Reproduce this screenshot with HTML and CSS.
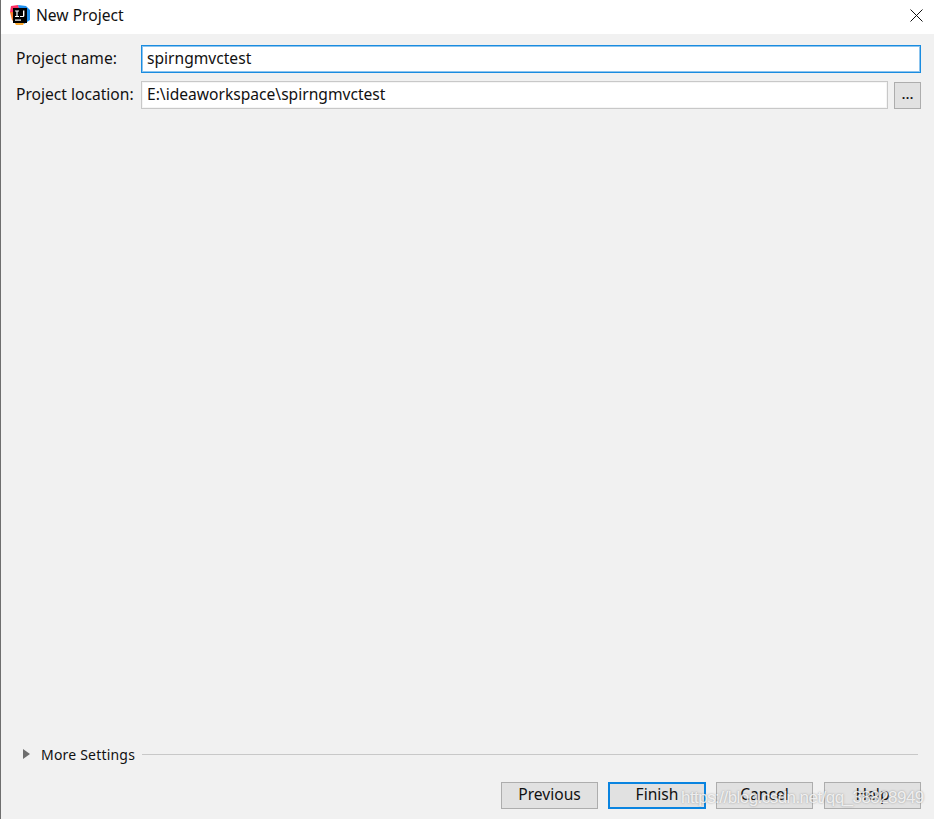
FILE: index.html
```html
<!DOCTYPE html>
<html lang="en">
<head>
<meta charset="utf-8">
<title>New Project</title>
<link rel="stylesheet" href="styles.css">
</head>
<body>
<div class="dialog">
  <header class="titlebar">
    <svg class="app-icon" width="21" height="22" viewBox="0 0 21 22" aria-hidden="true">
      <path d="M1 2 L8 1 L10 6 L3 12 L0 8 Z" fill="#fc2f63"/>
      <path d="M0 8 L4 8 L4 18 L2 16 Z" fill="#f97a2a"/>
      <path d="M8 1 L16 2 L20 6 L20 16 L14 20 L10 8 Z" fill="#1e8fee"/>
      <path d="M3 16 L15 17 L13 21 L6 21 Z" fill="#f9a72c"/>
      <rect x="3" y="4" width="14" height="15" fill="#000"/>
      <rect x="5" y="15.5" width="6" height="1.2" fill="#fff"/>
      <path d="M5 6.5 H9 V7.6 H7.6 V12 H9 V13 H5 V12 H6.4 V7.6 H5 Z M13 6.5 H14.4 V11.5 Q14.4 13 13 13 H10 V12 H13 Z" fill="#fff"/>
    </svg>
    <span class="title">New Project</span>
    <svg class="close" width="13" height="13" viewBox="0 0 13 13" aria-hidden="true">
      <path d="M0.5 0.5 L12.5 12.5 M12.5 0.5 L0.5 12.5" stroke="#111" stroke-width="1" fill="none"/>
    </svg>
  </header>
  <main class="content">
    <div class="form">
      <div class="row">
        <label class="label">Project name:</label>
        <div class="input focused">spirngmvctest</div>
      </div>
      <div class="row">
        <label class="label">Project location:</label>
        <div class="input grow">E:\ideaworkspace\spirngmvctest</div>
        <div class="browse">...</div>
      </div>
    </div>
    <div class="settings">
      <span class="arrow"></span>
      <span class="settings-label">More Settings</span>
      <span class="rule"></span>
    </div>
    <div class="buttons">
      <div class="btn">Previous</div>
      <div class="btn primary">Finish</div>
      <div class="btn">Cancel</div>
      <div class="btn help">Help</div>
    </div>
  </main>
  <div class="watermark">https://blog.csdn.net/qq_38828949</div>
</div>
</body>
</html>
```
FILE: styles.css
```css
* { box-sizing: border-box; }
html, body { margin: 0; height: 100%; }
body {
  font-family: "Noto Sans", "Open Sans", sans-serif;
  font-size: 15.6px;
  color: #111;
  overflow: hidden;
}
.dialog {
  position: relative;
  width: 934px;
  height: 819px;
  display: flex;
  flex-direction: column;
  background: #f1f1f1;
  border-left: 1px solid #6e6e6e;
}
.titlebar {
  height: 34px;
  flex: none;
  background: #fff;
  display: flex;
  align-items: center;
  padding: 0 11px 4px 9px;
}
.app-icon { flex: none; }
.title { margin-left: 5px; font-size: 15.6px; }
.close { margin-left: auto; }
.content {
  flex: 1;
  display: flex;
  flex-direction: column;
  padding: 11px 13px 10px 15px;
}
.form { display: flex; flex-direction: column; gap: 8px; }
.row { display: flex; align-items: center; height: 28px; }
.label { width: 125px; flex: none; padding-bottom: 2px; }
.input {
  flex: 1;
  height: 28px;
  background: #fff;
  border: 1px solid #c8c8c8;
  display: flex;
  align-items: center;
  padding: 0 5px 2px;
}
.focused { border: 1px solid #1a8ce0; box-shadow: inset 0 0 0 1px #8cc4ee; }
.grow { box-shadow: inset 0 0 0 1px #f5f5f5; }
.browse {
  width: 27px;
  height: 27px;
  margin-left: 6px;
  flex: none;
  background: #e1e1e1;
  border: 1px solid #adadad;
  text-align: center;
  line-height: 21px;
  font-size: 15px;
  font-weight: 500;
}
.settings {
  margin-top: auto;
  display: flex;
  align-items: center;
  height: 20px;
  padding-left: 7px;
}
.arrow {
  width: 0;
  height: 0;
  border-left: 7px solid #6e6e6e;
  border-top: 5.5px solid transparent;
  border-bottom: 5.5px solid transparent;
  margin-top: -2px;
}
.settings-label { margin-left: 11px; font-size: 14px; letter-spacing: 0.2px; padding-bottom: 2px; }
.rule { flex: 1; height: 1px; background: #c8c8c8; margin: -2px 3px 0 7px; }
.buttons {
  display: flex;
  justify-content: flex-end;
  gap: 10px;
  margin-top: 17px;
}
.btn {
  width: 97px;
  height: 27px;
  background: #e1e1e1;
  border: 1px solid #adadad;
  display: flex;
  align-items: center;
  justify-content: center;
  padding-bottom: 3px;
}
.primary { width: 98px; border: 2px solid #0a84e0; }
.help { margin-left: 1px; }
.watermark {
  position: absolute;
  left: 680px;
  top: 788px;
  font-family: "Liberation Sans", sans-serif;
  font-size: 17px;
  letter-spacing: -0.55px;
  color: rgba(255, 255, 255, 0.8);
  text-shadow: 0 0 2px rgba(90, 90, 90, 0.55);
  white-space: nowrap;
}
```
